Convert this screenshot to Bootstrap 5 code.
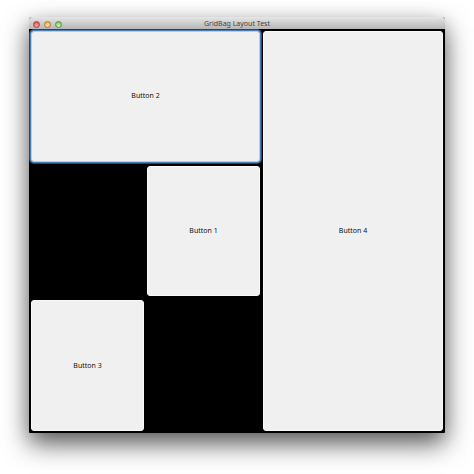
<!DOCTYPE html>
<html lang="en">
<head>
<meta charset="utf-8">
<meta name="viewport" content="width=device-width, initial-scale=1">
<title>GridBag Layout Test</title>
<link href="https://cdn.jsdelivr.net/npm/bootstrap@5.3.0/dist/css/bootstrap.min.css" rel="stylesheet">
<style>
body { background: #fff; font-family: "Noto Sans", "Open Sans", sans-serif; font-size: 7px; line-height: 10px; color: #111; }
.desktop { padding: 17px 29px 41px; }
.app-window { background: #000; border-radius: 3px 3px 1px 1px; box-shadow: 0 11px 26px rgba(0,0,0,.62), 0 4px 16px rgba(0,0,0,.12); }
.title-bar { display: grid; grid-template-columns: 1fr auto 1fr; height: 12px; padding: 2px 4px 0; border-radius: 3px 3px 0 0; background: linear-gradient(#e6e6e6, #b6b6b6); color: #444; }
.lights { gap: 4px; }
.light { width: 7px; height: 7px; border: 1px solid; border-radius: 50%; }
.light-close { background: radial-gradient(circle at 50% 80%, #ffaaa4, #d9403c); border-color: #a6433f; }
.light-min { background: radial-gradient(circle at 50% 80%, #ffeaa0, #e2a03a); border-color: #b07a38; }
.light-zoom { background: radial-gradient(circle at 50% 80%, #d5f8b8, #68b450); border-color: #55924a; }
.bag { display: grid; grid-template-columns: 113fr 113fr 180fr; grid-template-rows: repeat(3, minmax(0, 1fr)); gap: 4px 3px; padding: 2px; }
.cell { background: #f0f0f0; color: #111; border: 1px solid #fafafa; border-radius: 3px; padding: 0; font: inherit; }
.cell:hover, .cell:focus { background: #f0f0f0; }
.cell-1 { grid-area: 2 / 2; }
.cell-2 { grid-area: 1 / 1 / 2 / 3; border-color: #b4cdea; box-shadow: 0 0 0 1px #4a7cb4, 0 0 0 2px #28476f; }
.cell-3 { grid-area: 3 / 1; }
.cell-4 { grid-area: 1 / 3 / 4 / 4; }
</style>
</head>
<body>
<div class="desktop vh-100 d-flex">
  <main class="app-window d-flex flex-column flex-grow-1">
    <header class="title-bar align-items-center">
      <div class="lights d-flex">
        <button type="button" class="light light-close p-0" aria-label="Close"></button>
        <button type="button" class="light light-min p-0" aria-label="Minimize"></button>
        <button type="button" class="light light-zoom p-0" aria-label="Zoom"></button>
      </div>
      <span>GridBag Layout Test</span>
    </header>
    <div class="bag flex-grow-1">
      <button type="button" class="btn cell cell-2">Button 2</button>
      <button type="button" class="btn cell cell-1">Button 1</button>
      <button type="button" class="btn cell cell-3">Button 3</button>
      <button type="button" class="btn cell cell-4">Button 4</button>
    </div>
  </main>
</div>
<script src="https://cdn.jsdelivr.net/npm/bootstrap@5.3.0/dist/js/bootstrap.bundle.min.js"></script>
</body>
</html>
